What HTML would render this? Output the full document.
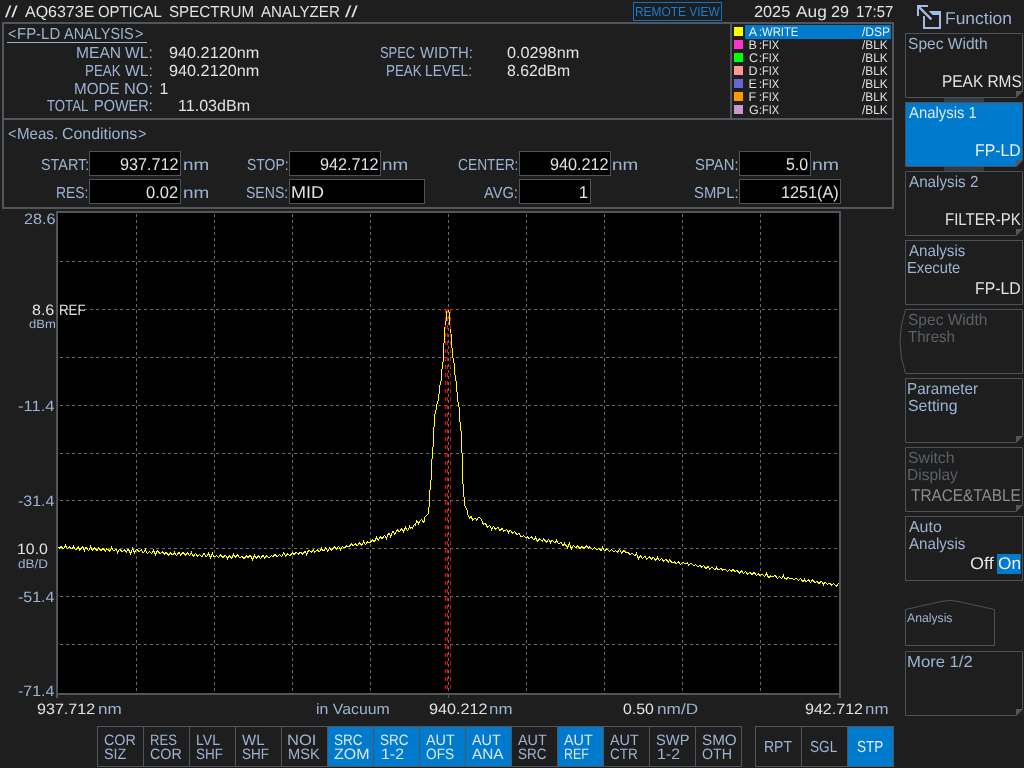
<!DOCTYPE html>
<html><head><meta charset="utf-8"><title>AQ6373E Optical Spectrum Analyzer</title>
<style>
html,body{margin:0;padding:0;}
body{width:1024px;height:768px;background:#1e1e1e;overflow:hidden;position:relative;font-family:"Liberation Sans",sans-serif;}
.t{position:absolute;white-space:pre;line-height:1;transform-origin:0 0;text-rendering:geometricPrecision;font-family:"Liberation Sans",sans-serif;}
.r{position:absolute;box-sizing:border-box;}
svg{position:absolute;left:0;top:0;}
#w{position:absolute;left:0;top:0;width:1024px;height:768px;will-change:transform;}
</style></head><body><div id="w">
<span class="t" style="left:5.40px;top:5px;font-size:16px;color:#e2e2e2;transform:scaleX(1.4164);">//</span>
<span class="t" style="left:24.57px;top:5px;font-size:16px;color:#e2e2e2;transform:scaleX(0.9990);">AQ6373E</span>
<span class="t" style="left:97.60px;top:5px;font-size:16px;color:#e2e2e2;transform:scaleX(0.9303);">OPTICAL</span>
<span class="t" style="left:169.12px;top:5px;font-size:16px;color:#e2e2e2;transform:scaleX(0.9471);">SPECTRUM</span>
<span class="t" style="left:260.77px;top:5px;font-size:16px;color:#e2e2e2;transform:scaleX(0.9465);">ANALYZER</span>
<span class="t" style="left:345.00px;top:5px;font-size:16px;color:#e2e2e2;transform:scaleX(1.4276);">//</span>
<div class="r" style="left:633px;top:2px;width:89px;height:19px;border:1px solid #0b74c8;"></div>
<span class="t" style="left:634.77px;top:5px;font-size:13px;color:#1080d8;transform:scaleX(0.9168);">REMOTE VIEW</span>
<span class="t" style="left:753.79px;top:5px;font-size:16px;color:#e2e2e2;transform:scaleX(1.0168);">2025</span>
<span class="t" style="left:795.57px;top:5px;font-size:16px;color:#e2e2e2;transform:scaleX(1.0818);">Aug</span>
<span class="t" style="left:830.69px;top:5px;font-size:16px;color:#e2e2e2;transform:scaleX(1.0099);">29</span>
<span class="t" style="left:856.17px;top:5px;font-size:16px;color:#e2e2e2;transform:scaleX(0.9286);">17:57</span>
<div class="r" style="left:2px;top:22px;width:892px;height:98px;border:2px solid #51565d;"></div>
<div class="r" style="left:2px;top:118px;width:892px;height:91px;border:2px solid #51565d;"></div>
<div class="r" style="left:730px;top:22px;width:164px;height:98px;border:2px solid #51565d;"></div>
<span class="t" style="left:8.41px;top:27px;font-size:16px;color:#9eb3d2;transform:scaleX(0.8855);">&lt;</span>
<span class="t" style="left:17.37px;top:27px;font-size:16px;color:#9eb3d2;transform:scaleX(0.9352);">FP-LD</span>
<span class="t" style="left:63.97px;top:27px;font-size:16px;color:#9eb3d2;transform:scaleX(0.9054);">ANALYSIS</span>
<span class="t" style="left:135.10px;top:27px;font-size:16px;color:#9eb3d2;transform:scaleX(0.8984);">&gt;</span>
<div class="r" style="left:7px;top:42px;width:140px;height:1px;background:#9eb3d2;"></div>
<span class="t" style="left:76.22px;top:46px;font-size:16px;color:#9eb3d2;transform:scaleX(0.9744);">MEAN</span>
<span class="t" style="left:124.94px;top:46px;font-size:16px;color:#9eb3d2;transform:scaleX(0.9748);">WL:</span>
<span class="t" style="left:168.75px;top:46px;font-size:16px;color:#e2e2e2;transform:scaleX(1.0151);">940.2120nm</span>
<span class="t" style="left:84.50px;top:64px;font-size:16px;color:#9eb3d2;transform:scaleX(0.8350);">PEAK</span>
<span class="t" style="left:124.94px;top:64px;font-size:16px;color:#9eb3d2;transform:scaleX(0.9748);">WL:</span>
<span class="t" style="left:168.75px;top:64px;font-size:16px;color:#e2e2e2;transform:scaleX(1.0151);">940.2120nm</span>
<span class="t" style="left:74.35px;top:82px;font-size:16px;color:#9eb3d2;transform:scaleX(0.9518);">MODE</span>
<span class="t" style="left:123.66px;top:82px;font-size:16px;color:#9eb3d2;transform:scaleX(1.0222);">NO:</span>
<span class="t" style="left:159.58px;top:82px;font-size:16px;color:#e2e2e2;transform:scaleX(1.0000);">1</span>
<span class="t" style="left:47.21px;top:99px;font-size:16px;color:#9eb3d2;transform:scaleX(0.8252);">TOTAL</span>
<span class="t" style="left:93.81px;top:99px;font-size:16px;color:#9eb3d2;transform:scaleX(0.9054);">POWER:</span>
<span class="t" style="left:178.28px;top:99px;font-size:16px;color:#e2e2e2;transform:scaleX(1.0038);">11.03dBm</span>
<span class="t" style="left:379.92px;top:46px;font-size:16px;color:#9eb3d2;transform:scaleX(0.8070);">SPEC</span>
<span class="t" style="left:419.64px;top:46px;font-size:16px;color:#9eb3d2;transform:scaleX(0.9285);">WIDTH:</span>
<span class="t" style="left:507.07px;top:46px;font-size:16px;color:#e2e2e2;transform:scaleX(1.0143);">0.0298nm</span>
<span class="t" style="left:385.50px;top:64px;font-size:16px;color:#9eb3d2;transform:scaleX(0.8374);">PEAK</span>
<span class="t" style="left:425.26px;top:64px;font-size:16px;color:#9eb3d2;transform:scaleX(0.8682);">LEVEL:</span>
<span class="t" style="left:507.02px;top:64px;font-size:16px;color:#e2e2e2;transform:scaleX(0.9855);">8.62dBm</span>
<div class="r" style="left:745px;top:25px;width:146px;height:14px;background:#007acc;"></div>
<div class="r" style="left:734px;top:27px;width:9px;height:9px;background:#ffff00;"></div>
<span class="t" style="left:748.77px;top:26px;font-size:12.5px;color:#f2f2f2;transform:scaleX(1.0000);">A</span>
<span class="t" style="left:758.86px;top:26px;font-size:12.5px;color:#f2f2f2;transform:scaleX(1.0000);">:</span>
<span class="t" style="left:762.45px;top:26px;font-size:12.5px;color:#f2f2f2;transform:scaleX(0.9018);">WRITE</span>
<span class="t" style="left:862.00px;top:26px;font-size:12.5px;color:#f2f2f2;transform:scaleX(0.9641);">/DSP</span>
<div class="r" style="left:734px;top:40px;width:9px;height:9px;background:#ff33cc;"></div>
<span class="t" style="left:748.48px;top:39px;font-size:12.5px;color:#e0e0e0;transform:scaleX(1.0000);">B</span>
<span class="t" style="left:758.86px;top:39px;font-size:12.5px;color:#e0e0e0;transform:scaleX(1.0000);">:</span>
<span class="t" style="left:761.60px;top:39px;font-size:12.5px;color:#e0e0e0;transform:scaleX(0.8809);">FIX</span>
<span class="t" style="left:862.00px;top:39px;font-size:12.5px;color:#e0e0e0;transform:scaleX(0.9458);">/BLK</span>
<div class="r" style="left:734px;top:53px;width:9px;height:9px;background:#00ff00;"></div>
<span class="t" style="left:748.88px;top:52px;font-size:12.5px;color:#e0e0e0;transform:scaleX(1.0000);">C</span>
<span class="t" style="left:758.86px;top:52px;font-size:12.5px;color:#e0e0e0;transform:scaleX(1.0000);">:</span>
<span class="t" style="left:761.60px;top:52px;font-size:12.5px;color:#e0e0e0;transform:scaleX(0.8809);">FIX</span>
<span class="t" style="left:862.00px;top:52px;font-size:12.5px;color:#e0e0e0;transform:scaleX(0.9458);">/BLK</span>
<div class="r" style="left:734px;top:66px;width:9px;height:9px;background:#ff9999;"></div>
<span class="t" style="left:748.48px;top:65px;font-size:12.5px;color:#e0e0e0;transform:scaleX(1.0000);">D</span>
<span class="t" style="left:758.86px;top:65px;font-size:12.5px;color:#e0e0e0;transform:scaleX(1.0000);">:</span>
<span class="t" style="left:761.60px;top:65px;font-size:12.5px;color:#e0e0e0;transform:scaleX(0.8809);">FIX</span>
<span class="t" style="left:862.00px;top:65px;font-size:12.5px;color:#e0e0e0;transform:scaleX(0.9458);">/BLK</span>
<div class="r" style="left:734px;top:79px;width:9px;height:9px;background:#6666cc;"></div>
<span class="t" style="left:748.48px;top:78px;font-size:12.5px;color:#e0e0e0;transform:scaleX(1.0000);">E</span>
<span class="t" style="left:758.86px;top:78px;font-size:12.5px;color:#e0e0e0;transform:scaleX(1.0000);">:</span>
<span class="t" style="left:761.60px;top:78px;font-size:12.5px;color:#e0e0e0;transform:scaleX(0.8809);">FIX</span>
<span class="t" style="left:862.00px;top:78px;font-size:12.5px;color:#e0e0e0;transform:scaleX(0.9458);">/BLK</span>
<div class="r" style="left:734px;top:92px;width:9px;height:9px;background:#ff9900;"></div>
<span class="t" style="left:748.48px;top:91px;font-size:12.5px;color:#e0e0e0;transform:scaleX(1.0000);">F</span>
<span class="t" style="left:758.86px;top:91px;font-size:12.5px;color:#e0e0e0;transform:scaleX(1.0000);">:</span>
<span class="t" style="left:761.60px;top:91px;font-size:12.5px;color:#e0e0e0;transform:scaleX(0.8809);">FIX</span>
<span class="t" style="left:862.00px;top:91px;font-size:12.5px;color:#e0e0e0;transform:scaleX(0.9458);">/BLK</span>
<div class="r" style="left:734px;top:105px;width:9px;height:9px;background:#cc99cc;"></div>
<span class="t" style="left:748.88px;top:104px;font-size:12.5px;color:#e0e0e0;transform:scaleX(1.0000);">G</span>
<span class="t" style="left:758.86px;top:104px;font-size:12.5px;color:#e0e0e0;transform:scaleX(1.0000);">:</span>
<span class="t" style="left:761.60px;top:104px;font-size:12.5px;color:#e0e0e0;transform:scaleX(0.8809);">FIX</span>
<span class="t" style="left:862.00px;top:104px;font-size:12.5px;color:#e0e0e0;transform:scaleX(0.9458);">/BLK</span>
<span class="t" style="left:7.70px;top:127px;font-size:16px;color:#9eb3d2;transform:scaleX(0.8984);">&lt;</span>
<span class="t" style="left:16.96px;top:127px;font-size:16px;color:#9eb3d2;transform:scaleX(0.9436);">Meas.</span>
<span class="t" style="left:61.80px;top:127px;font-size:16px;color:#9eb3d2;transform:scaleX(0.9956);">Conditions</span>
<span class="t" style="left:138.00px;top:127px;font-size:16px;color:#9eb3d2;transform:scaleX(0.8984);">&gt;</span>
<span class="t" style="left:40.60px;top:158px;font-size:16px;color:#9eb3d2;transform:scaleX(0.8985);">START:</span>
<div class="r" style="left:89px;top:151px;width:92px;height:25px;background:#000;border:1px solid #4d5359;"></div>
<span class="t" style="left:119.76px;top:156px;font-size:17px;color:#e2e2e2;transform:scaleX(0.9511);">937.712</span>
<span class="t" style="left:182.50px;top:158px;font-size:16px;color:#9eb3d2;transform:scaleX(1.1799);">nm</span>
<span class="t" style="left:56.36px;top:186px;font-size:16px;color:#9eb3d2;transform:scaleX(0.8677);">RES:</span>
<div class="r" style="left:89px;top:179px;width:92px;height:25px;background:#000;border:1px solid #4d5359;"></div>
<span class="t" style="left:146.13px;top:184px;font-size:17px;color:#e2e2e2;transform:scaleX(0.9700);">0.02</span>
<span class="t" style="left:182.50px;top:186px;font-size:16px;color:#9eb3d2;transform:scaleX(1.1799);">nm</span>
<span class="t" style="left:246.87px;top:158px;font-size:16px;color:#9eb3d2;transform:scaleX(0.8726);">STOP:</span>
<div class="r" style="left:289px;top:151px;width:92px;height:25px;background:#000;border:1px solid #4d5359;"></div>
<span class="t" style="left:319.76px;top:156px;font-size:17px;color:#e2e2e2;transform:scaleX(0.9511);">942.712</span>
<span class="t" style="left:382.25px;top:158px;font-size:16px;color:#9eb3d2;transform:scaleX(1.1799);">nm</span>
<span class="t" style="left:246.12px;top:186px;font-size:16px;color:#9eb3d2;transform:scaleX(0.8781);">SENS:</span>
<div class="r" style="left:289px;top:179px;width:136px;height:25px;background:#000;border:1px solid #4d5359;"></div>
<span class="t" style="left:291.02px;top:184px;font-size:17px;color:#e2e2e2;transform:scaleX(1.0615);">MID</span>
<span class="t" style="left:457.81px;top:158px;font-size:16px;color:#9eb3d2;transform:scaleX(0.8607);">CENTER:</span>
<div class="r" style="left:519px;top:151px;width:92px;height:25px;background:#000;border:1px solid #4d5359;"></div>
<span class="t" style="left:549.76px;top:156px;font-size:17px;color:#e2e2e2;transform:scaleX(0.9511);">940.212</span>
<span class="t" style="left:612.00px;top:158px;font-size:16px;color:#9eb3d2;transform:scaleX(1.1799);">nm</span>
<span class="t" style="left:484.47px;top:186px;font-size:16px;color:#9eb3d2;transform:scaleX(0.9137);">AVG:</span>
<div class="r" style="left:519px;top:179px;width:72px;height:25px;background:#000;border:1px solid #4d5359;"></div>
<span class="t" style="left:578.86px;top:184px;font-size:17px;color:#e2e2e2;transform:scaleX(1.0000);">1</span>
<span class="t" style="left:694.83px;top:158px;font-size:16px;color:#9eb3d2;transform:scaleX(0.9293);">SPAN:</span>
<div class="r" style="left:739px;top:151px;width:72px;height:25px;background:#000;border:1px solid #4d5359;"></div>
<span class="t" style="left:786.11px;top:156px;font-size:17px;color:#e2e2e2;transform:scaleX(0.9348);">5.0</span>
<span class="t" style="left:811.71px;top:158px;font-size:16px;color:#9eb3d2;transform:scaleX(1.2172);">nm</span>
<span class="t" style="left:693.83px;top:186px;font-size:16px;color:#9eb3d2;transform:scaleX(0.9271);">SMPL:</span>
<div class="r" style="left:739px;top:179px;width:102px;height:25px;background:#000;border:1px solid #4d5359;"></div>
<span class="t" style="left:781.27px;top:184px;font-size:17px;color:#e2e2e2;transform:scaleX(0.9546);">1251(A)</span>
<svg width="1024" height="768" viewBox="0 0 1024 768" shape-rendering="crispEdges">
<rect x="57" y="212" width="783" height="482" fill="#000" stroke="#51565d" stroke-width="2"/>
<rect x="56" y="695" width="2" height="3" fill="#51565d"/>
<rect x="839" y="695" width="2" height="3" fill="#51565d"/>
<rect x="448" y="695" width="1" height="3" fill="#51565d"/>
<line x1="136.5" y1="214" x2="136.5" y2="692" stroke="#6a6a6a" stroke-width="1" stroke-dasharray="3 3"/>
<line x1="214.5" y1="214" x2="214.5" y2="692" stroke="#6a6a6a" stroke-width="1" stroke-dasharray="3 3"/>
<line x1="292.5" y1="214" x2="292.5" y2="692" stroke="#6a6a6a" stroke-width="1" stroke-dasharray="3 3"/>
<line x1="370.5" y1="214" x2="370.5" y2="692" stroke="#6a6a6a" stroke-width="1" stroke-dasharray="3 3"/>
<line x1="448.5" y1="214" x2="448.5" y2="692" stroke="#6a6a6a" stroke-width="1" stroke-dasharray="3 3"/>
<line x1="526.5" y1="214" x2="526.5" y2="692" stroke="#6a6a6a" stroke-width="1" stroke-dasharray="3 3"/>
<line x1="604.5" y1="214" x2="604.5" y2="692" stroke="#6a6a6a" stroke-width="1" stroke-dasharray="3 3"/>
<line x1="682.5" y1="214" x2="682.5" y2="692" stroke="#6a6a6a" stroke-width="1" stroke-dasharray="3 3"/>
<line x1="760.5" y1="214" x2="760.5" y2="692" stroke="#6a6a6a" stroke-width="1" stroke-dasharray="3 3"/>
<line x1="60" y1="261.5" x2="838" y2="261.5" stroke="#6a6a6a" stroke-width="1" stroke-dasharray="3 3"/>
<line x1="60" y1="309.5" x2="838" y2="309.5" stroke="#6a6a6a" stroke-width="1" stroke-dasharray="3 3"/>
<line x1="60" y1="357.5" x2="838" y2="357.5" stroke="#6a6a6a" stroke-width="1" stroke-dasharray="3 3"/>
<line x1="60" y1="405.5" x2="838" y2="405.5" stroke="#6a6a6a" stroke-width="1" stroke-dasharray="3 3"/>
<line x1="60" y1="453.5" x2="838" y2="453.5" stroke="#6a6a6a" stroke-width="1" stroke-dasharray="3 3"/>
<line x1="60" y1="500.5" x2="838" y2="500.5" stroke="#6a6a6a" stroke-width="1" stroke-dasharray="3 3"/>
<line x1="60" y1="548.5" x2="838" y2="548.5" stroke="#6a6a6a" stroke-width="1" stroke-dasharray="3 3"/>
<line x1="60" y1="596.5" x2="838" y2="596.5" stroke="#6a6a6a" stroke-width="1" stroke-dasharray="3 3"/>
<line x1="60" y1="644.5" x2="838" y2="644.5" stroke="#6a6a6a" stroke-width="1" stroke-dasharray="3 3"/>
<polyline points="58.5,547.5 59.5,548.5 60.5,546.5 61.5,546.5 62.5,548.5 63.5,548.5 64.5,547.5 65.5,545.5 66.5,547.5 67.5,548.5 68.5,547.5 69.5,546.5 70.5,548.5 71.5,548.5 72.5,548.5 73.5,546.5 74.5,548.5 75.5,549.5 76.5,549.5 77.5,547.5 78.5,546.5 79.5,550.5 80.5,549.5 81.5,547.5 82.5,546.5 83.5,548.5 84.5,550.5 85.5,547.5 86.5,547.5 87.5,549.5 88.5,550.5 89.5,549.5 90.5,546.5 91.5,548.5 92.5,550.5 93.5,549.5 94.5,547.5 95.5,548.5 96.5,550.5 97.5,550.5 98.5,547.5 99.5,548.5 100.5,550.5 101.5,550.5 102.5,548.5 103.5,548.5 104.5,550.5 105.5,551.5 106.5,548.5 107.5,549.5 108.5,549.5 109.5,551.5 110.5,550.5 111.5,547.5 112.5,549.5 113.5,550.5 114.5,550.5 115.5,549.5 116.5,549.5 117.5,552.5 118.5,550.5 119.5,549.5 120.5,549.5 121.5,551.5 122.5,551.5 123.5,550.5 124.5,549.5 125.5,551.5 126.5,552.5 127.5,549.5 128.5,549.5 129.5,551.5 130.5,553.5 131.5,551.5 132.5,548.5 133.5,550.5 134.5,552.5 135.5,550.5 136.5,549.5 137.5,549.5 138.5,551.5 139.5,551.5 140.5,550.5 141.5,549.5 142.5,552.5 143.5,552.5 144.5,551.5 145.5,549.5 146.5,552.5 147.5,553.5 148.5,552.5 149.5,551.5 150.5,552.5 151.5,553.5 152.5,552.5 153.5,550.5 154.5,552.5 155.5,554.5 156.5,552.5 157.5,550.5 158.5,551.5 159.5,553.5 160.5,553.5 161.5,552.5 162.5,551.5 163.5,553.5 164.5,554.5 165.5,552.5 166.5,552.5 167.5,554.5 168.5,555.5 169.5,553.5 170.5,552.5 171.5,554.5 172.5,554.5 173.5,554.5 174.5,552.5 175.5,554.5 176.5,555.5 177.5,554.5 178.5,552.5 179.5,552.5 180.5,555.5 181.5,554.5 182.5,552.5 183.5,552.5 184.5,554.5 185.5,555.5 186.5,553.5 187.5,552.5 188.5,554.5 189.5,555.5 190.5,554.5 191.5,552.5 192.5,555.5 193.5,556.5 194.5,554.5 195.5,553.5 196.5,554.5 197.5,556.5 198.5,555.5 199.5,554.5 200.5,555.5 201.5,556.5 202.5,556.5 203.5,553.5 204.5,553.5 205.5,556.5 206.5,556.5 207.5,555.5 208.5,553.5 209.5,555.5 210.5,557.5 211.5,555.5 212.5,553.5 213.5,556.5 214.5,556.5 215.5,556.5 216.5,555.5 217.5,556.5 218.5,557.5 219.5,556.5 220.5,554.5 221.5,555.5 222.5,557.5 223.5,557.5 224.5,555.5 225.5,555.5 226.5,556.5 227.5,558.5 228.5,556.5 229.5,555.5 230.5,557.5 231.5,558.5 232.5,556.5 233.5,554.5 234.5,556.5 235.5,557.5 236.5,555.5 237.5,554.5 238.5,556.5 239.5,557.5 240.5,557.5 241.5,556.5 242.5,556.5 243.5,558.5 244.5,558.5 245.5,556.5 246.5,555.5 247.5,557.5 248.5,557.5 249.5,555.5 250.5,555.5 251.5,557.5 252.5,559.5 253.5,557.5 254.5,555.5 255.5,557.5 256.5,558.5 257.5,556.5 258.5,555.5 259.5,557.5 260.5,558.5 261.5,557.5 262.5,555.5 263.5,555.5 264.5,558.5 265.5,557.5 266.5,555.5 267.5,556.5 268.5,557.5 269.5,557.5 270.5,556.5 271.5,555.5 272.5,556.5 273.5,556.5 274.5,554.5 275.5,554.5 276.5,556.5 277.5,556.5 278.5,555.5 279.5,554.5 280.5,555.5 281.5,556.5 282.5,555.5 283.5,552.5 284.5,553.5 285.5,556.5 286.5,555.5 287.5,553.5 288.5,554.5 289.5,555.5 290.5,555.5 291.5,553.5 292.5,552.5 293.5,554.5 294.5,554.5 295.5,552.5 296.5,552.5 297.5,553.5 298.5,554.5 299.5,552.5 300.5,552.5 301.5,552.5 302.5,554.5 303.5,553.5 304.5,551.5 305.5,551.5 306.5,554.5 307.5,552.5 308.5,550.5 309.5,550.5 310.5,551.5 311.5,552.5 312.5,550.5 313.5,549.5 314.5,552.5 315.5,551.5 316.5,550.5 317.5,549.5 318.5,551.5 319.5,551.5 320.5,550.5 321.5,548.5 322.5,550.5 323.5,550.5 324.5,550.5 325.5,547.5 326.5,548.5 327.5,551.5 328.5,550.5 329.5,547.5 330.5,548.5 331.5,550.5 332.5,549.5 333.5,547.5 334.5,546.5 335.5,548.5 336.5,549.5 337.5,547.5 338.5,546.5 339.5,547.5 340.5,549.5 341.5,547.5 342.5,546.5 343.5,547.5 344.5,547.5 345.5,547.5 346.5,545.5 347.5,546.5 348.5,546.5 349.5,546.5 350.5,544.5 351.5,543.5 352.5,545.5 353.5,545.5 354.5,544.5 355.5,543.5 356.5,545.5 357.5,545.5 358.5,544.5 359.5,542.5 360.5,543.5 361.5,545.5 362.5,544.5 363.5,541.5 364.5,543.5 365.5,544.5 366.5,543.5 367.5,541.5 368.5,542.5 369.5,542.5 370.5,542.5 371.5,540.5 372.5,539.5 373.5,541.5 374.5,541.5 375.5,539.5 376.5,537.5 377.5,539.5 378.5,540.5 379.5,537.5 380.5,536.5 381.5,538.5 382.5,538.5 383.5,536.5 384.5,535.5 385.5,536.5 386.5,538.5 387.5,535.5 388.5,533.5 389.5,533.5 390.5,536.5 391.5,534.5 392.5,531.5 393.5,531.5 394.5,534.5 395.5,533.5 396.5,530.5 397.5,529.5 398.5,531.5 399.5,531.5 400.5,530.5 401.5,528.5 402.5,529.5 403.5,531.5 404.5,529.5 405.5,527.5 406.5,529.5 407.5,530.5 408.5,529.5 409.5,526.5 410.5,528.5 411.5,527.5 412.5,528.5 413.5,525.5 414.5,524.5 415.5,525.5 416.5,520.5 417.5,521.5 418.5,523.5 419.5,521.5 420.5,520.5 421.5,519.5 422.5,520.5 423.5,522.5 424.5,521.5 424.5,517.5 425.5,516.5 426.5,515.5 427.5,514.5 428.5,513.5 428.5,507.5 429.5,506.5 429.5,490.5 430.5,489.5 430.5,480.5 431.5,479.5 431.5,459.5 432.5,458.5 432.5,447.5 433.5,446.5 433.5,427.5 434.5,426.5 434.5,414.5 435.5,413.5 435.5,410.5 436.5,409.5 436.5,404.5 437.5,403.5 437.5,401.5 438.5,400.5 438.5,394.5 439.5,393.5 439.5,385.5 440.5,384.5 440.5,381.5 441.5,380.5 441.5,369.5 442.5,368.5 442.5,362.5 443.5,361.5 443.5,343.5 444.5,342.5 444.5,327.5 445.5,326.5 445.5,321.5 446.5,320.5 446.5,311.5 447.5,310.5 447.5,310.5 448.5,310.5 448.5,311.5 449.5,312.5 449.5,324.5 450.5,325.5 450.5,333.5 451.5,334.5 451.5,347.5 452.5,348.5 452.5,357.5 453.5,358.5 453.5,362.5 454.5,363.5 454.5,374.5 455.5,375.5 455.5,380.5 456.5,381.5 456.5,391.5 457.5,392.5 457.5,401.5 458.5,402.5 458.5,406.5 459.5,407.5 459.5,421.5 460.5,422.5 460.5,430.5 461.5,431.5 461.5,452.5 462.5,453.5 462.5,483.5 463.5,484.5 463.5,496.5 464.5,497.5 464.5,505.5 465.5,506.5 465.5,507.5 466.5,508.5 466.5,509.5 467.5,510.5 467.5,514.5 468.5,515.5 468.5,516.5 469.5,517.5 469.5,518.5 470.5,517.5 470.5,516.5 471.5,516.5 471.5,518.5 472.5,518.5 472.5,520.5 473.5,519.5 473.5,519.5 474.5,518.5 474.5,518.5 475.5,518.5 475.5,518.5 476.5,519.5 476.5,520.5 477.5,518.5 477.5,518.5 478.5,517.5 478.5,517.5 479.5,517.5 479.5,517.5 480.5,518.5 481.5,519.5 482.5,522.5 483.5,524.5 484.5,523.5 485.5,523.5 486.5,525.5 487.5,527.5 488.5,526.5 489.5,525.5 490.5,526.5 491.5,529.5 492.5,527.5 493.5,526.5 494.5,527.5 495.5,529.5 496.5,528.5 497.5,527.5 498.5,527.5 499.5,530.5 500.5,530.5 501.5,528.5 502.5,528.5 503.5,531.5 504.5,530.5 505.5,530.5 506.5,529.5 507.5,530.5 508.5,532.5 509.5,530.5 510.5,530.5 511.5,531.5 512.5,533.5 513.5,532.5 514.5,531.5 515.5,532.5 516.5,534.5 517.5,534.5 518.5,533.5 519.5,533.5 520.5,536.5 521.5,536.5 522.5,536.5 523.5,535.5 524.5,536.5 525.5,537.5 526.5,537.5 527.5,536.5 528.5,538.5 529.5,538.5 530.5,537.5 531.5,536.5 532.5,538.5 533.5,539.5 534.5,539.5 535.5,537.5 536.5,539.5 537.5,541.5 538.5,540.5 539.5,538.5 540.5,539.5 541.5,540.5 542.5,541.5 543.5,538.5 544.5,539.5 545.5,541.5 546.5,542.5 547.5,540.5 548.5,539.5 549.5,540.5 550.5,542.5 551.5,540.5 552.5,540.5 553.5,541.5 554.5,542.5 555.5,542.5 556.5,540.5 557.5,542.5 558.5,543.5 559.5,543.5 560.5,542.5 561.5,542.5 562.5,545.5 563.5,545.5 564.5,543.5 565.5,545.5 566.5,545.5 567.5,547.5 568.5,545.5 569.5,543.5 570.5,546.5 571.5,548.5 572.5,546.5 573.5,545.5 574.5,546.5 575.5,547.5 576.5,547.5 577.5,545.5 578.5,546.5 579.5,548.5 580.5,548.5 581.5,546.5 582.5,546.5 583.5,548.5 584.5,548.5 585.5,546.5 586.5,545.5 587.5,547.5 588.5,548.5 589.5,546.5 590.5,547.5 591.5,548.5 592.5,549.5 593.5,548.5 594.5,547.5 595.5,548.5 596.5,549.5 597.5,549.5 598.5,548.5 599.5,548.5 600.5,550.5 601.5,550.5 602.5,547.5 603.5,549.5 604.5,550.5 605.5,550.5 606.5,548.5 607.5,549.5 608.5,550.5 609.5,551.5 610.5,550.5 611.5,549.5 612.5,550.5 613.5,551.5 614.5,551.5 615.5,550.5 616.5,551.5 617.5,552.5 618.5,550.5 619.5,549.5 620.5,550.5 621.5,553.5 622.5,552.5 623.5,550.5 624.5,550.5 625.5,552.5 626.5,552.5 627.5,552.5 628.5,552.5 629.5,554.5 630.5,554.5 631.5,553.5 632.5,553.5 633.5,554.5 634.5,555.5 635.5,555.5 636.5,553.5 637.5,556.5 638.5,558.5 639.5,556.5 640.5,555.5 641.5,557.5 642.5,558.5 643.5,557.5 644.5,556.5 645.5,556.5 646.5,559.5 647.5,558.5 648.5,557.5 649.5,556.5 650.5,558.5 651.5,559.5 652.5,557.5 653.5,557.5 654.5,558.5 655.5,560.5 656.5,559.5 657.5,557.5 658.5,559.5 659.5,560.5 660.5,559.5 661.5,558.5 662.5,559.5 663.5,561.5 664.5,560.5 665.5,559.5 666.5,559.5 667.5,561.5 668.5,562.5 669.5,559.5 670.5,560.5 671.5,562.5 672.5,562.5 673.5,562.5 674.5,561.5 675.5,563.5 676.5,563.5 677.5,562.5 678.5,561.5 679.5,563.5 680.5,564.5 681.5,563.5 682.5,562.5 683.5,562.5 684.5,563.5 685.5,563.5 686.5,563.5 687.5,562.5 688.5,565.5 689.5,564.5 690.5,563.5 691.5,563.5 692.5,564.5 693.5,565.5 694.5,565.5 695.5,564.5 696.5,565.5 697.5,566.5 698.5,566.5 699.5,565.5 700.5,565.5 701.5,567.5 702.5,566.5 703.5,565.5 704.5,566.5 705.5,568.5 706.5,568.5 707.5,566.5 708.5,566.5 709.5,569.5 710.5,568.5 711.5,567.5 712.5,567.5 713.5,568.5 714.5,569.5 715.5,569.5 716.5,567.5 717.5,569.5 718.5,569.5 719.5,569.5 720.5,568.5 721.5,568.5 722.5,570.5 723.5,569.5 724.5,569.5 725.5,569.5 726.5,570.5 727.5,571.5 728.5,570.5 729.5,569.5 730.5,570.5 731.5,571.5 732.5,569.5 733.5,569.5 734.5,571.5 735.5,571.5 736.5,570.5 737.5,570.5 738.5,572.5 739.5,573.5 740.5,571.5 741.5,570.5 742.5,572.5 743.5,573.5 744.5,572.5 745.5,571.5 746.5,572.5 747.5,574.5 748.5,573.5 749.5,572.5 750.5,572.5 751.5,574.5 752.5,574.5 753.5,572.5 754.5,572.5 755.5,574.5 756.5,575.5 757.5,574.5 758.5,573.5 759.5,575.5 760.5,575.5 761.5,574.5 762.5,574.5 763.5,575.5 764.5,576.5 765.5,575.5 766.5,573.5 767.5,575.5 768.5,577.5 769.5,577.5 770.5,575.5 771.5,576.5 772.5,576.5 773.5,576.5 774.5,575.5 775.5,575.5 776.5,577.5 777.5,578.5 778.5,577.5 779.5,576.5 780.5,577.5 781.5,578.5 782.5,577.5 783.5,575.5 784.5,578.5 785.5,578.5 786.5,579.5 787.5,577.5 788.5,577.5 789.5,578.5 790.5,578.5 791.5,578.5 792.5,578.5 793.5,579.5 794.5,579.5 795.5,578.5 796.5,578.5 797.5,579.5 798.5,580.5 799.5,579.5 800.5,578.5 801.5,579.5 802.5,581.5 803.5,581.5 804.5,579.5 805.5,581.5 806.5,581.5 807.5,580.5 808.5,579.5 809.5,581.5 810.5,582.5 811.5,581.5 812.5,579.5 813.5,580.5 814.5,582.5 815.5,582.5 816.5,581.5 817.5,581.5 818.5,583.5 819.5,583.5 820.5,581.5 821.5,581.5 822.5,582.5 823.5,584.5 824.5,582.5 825.5,582.5 826.5,583.5 827.5,584.5 828.5,583.5 829.5,583.5 830.5,583.5 831.5,585.5 832.5,584.5 833.5,583.5 834.5,584.5 835.5,585.5 836.5,586.5 837.5,584.5 838.5,583.5" fill="none" stroke="#ffff00" stroke-width="1"/>
<line x1="445.5" y1="309" x2="445.5" y2="693" stroke="#ff0000" stroke-width="1" stroke-dasharray="4 4"/>
<line x1="447.5" y1="309" x2="447.5" y2="693" stroke="#ff0000" stroke-width="1" stroke-dasharray="4 4"/>
<line x1="450.5" y1="309" x2="450.5" y2="693" stroke="#ff0000" stroke-width="1" stroke-dasharray="4 4"/>
<rect x="445" y="309" width="4" height="1" fill="#ff0000"/>
</svg>
<span class="t" style="left:23.59px;top:212px;font-size:15px;color:#9eb3d2;transform:scaleX(1.0793);">28.6</span>
<span class="t" style="left:32.41px;top:303px;font-size:15px;color:#e2e2e2;transform:scaleX(1.0685);">8.6</span>
<span class="t" style="left:58.66px;top:303px;font-size:15px;color:#e2e2e2;transform:scaleX(0.8875);">REF</span>
<span class="t" style="left:28.55px;top:318px;font-size:12px;color:#9eb3d2;transform:scaleX(1.0903);">dBm</span>
<span class="t" style="left:18.02px;top:399px;font-size:15px;color:#9eb3d2;transform:scaleX(1.1023);">-11.4</span>
<span class="t" style="left:18.05px;top:494px;font-size:15px;color:#9eb3d2;transform:scaleX(1.0653);">-31.4</span>
<span class="t" style="left:16.89px;top:542px;font-size:15px;color:#e2e2e2;transform:scaleX(1.0608);">10.0</span>
<span class="t" style="left:17.53px;top:558px;font-size:12.5px;color:#9eb3d2;transform:scaleX(1.0797);">dB/D</span>
<span class="t" style="left:18.05px;top:590px;font-size:15px;color:#9eb3d2;transform:scaleX(1.0653);">-51.4</span>
<span class="t" style="left:18.05px;top:684px;font-size:15px;color:#9eb3d2;transform:scaleX(1.0653);">-71.4</span>
<span class="t" style="left:37.36px;top:702px;font-size:15px;color:#e2e2e2;transform:scaleX(1.0732);">937.712</span>
<span class="t" style="left:97.62px;top:702px;font-size:15px;color:#9eb3d2;transform:scaleX(1.1394);">nm</span>
<span class="t" style="left:316.45px;top:702px;font-size:15px;color:#9eb3d2;transform:scaleX(1.0585);">in Vacuum</span>
<span class="t" style="left:428.50px;top:702px;font-size:15px;color:#e2e2e2;transform:scaleX(1.0799);">940.212</span>
<span class="t" style="left:488.89px;top:702px;font-size:15px;color:#9eb3d2;transform:scaleX(1.1261);">nm</span>
<span class="t" style="left:623.48px;top:702px;font-size:15px;color:#e2e2e2;transform:scaleX(1.0576);">0.50</span>
<span class="t" style="left:656.61px;top:702px;font-size:15px;color:#9eb3d2;transform:scaleX(1.1467);">nm/D</span>
<span class="t" style="left:804.76px;top:702px;font-size:15px;color:#e2e2e2;transform:scaleX(1.0704);">942.712</span>
<span class="t" style="left:864.64px;top:702px;font-size:15px;color:#9eb3d2;transform:scaleX(1.1261);">nm</span>
<div class="r" style="left:97px;top:726px;width:47px;height:41px;border:1px solid #51565d;"></div>
<span class="t" style="left:104.04px;top:733px;font-size:15px;color:#9eb3d2;transform:scaleX(0.9517);">COR</span>
<span class="t" style="left:104.10px;top:747px;font-size:15px;color:#9eb3d2;transform:scaleX(0.9572);">SIZ</span>
<div class="r" style="left:143px;top:726px;width:47px;height:41px;border:1px solid #51565d;"></div>
<span class="t" style="left:149.68px;top:733px;font-size:15px;color:#9eb3d2;transform:scaleX(0.8726);">RES</span>
<span class="t" style="left:150.04px;top:747px;font-size:15px;color:#9eb3d2;transform:scaleX(0.9517);">COR</span>
<div class="r" style="left:189px;top:726px;width:47px;height:41px;border:1px solid #51565d;"></div>
<span class="t" style="left:195.59px;top:733px;font-size:15px;color:#9eb3d2;transform:scaleX(0.9434);">LVL</span>
<span class="t" style="left:196.14px;top:747px;font-size:15px;color:#9eb3d2;transform:scaleX(0.8999);">SHF</span>
<div class="r" style="left:235px;top:726px;width:47px;height:41px;border:1px solid #51565d;"></div>
<span class="t" style="left:242.44px;top:733px;font-size:15px;color:#9eb3d2;transform:scaleX(0.9979);">WL</span>
<span class="t" style="left:242.39px;top:747px;font-size:15px;color:#9eb3d2;transform:scaleX(0.9017);">SHF</span>
<div class="r" style="left:281px;top:726px;width:47px;height:41px;border:1px solid #51565d;"></div>
<span class="t" style="left:287.40px;top:733px;font-size:15px;color:#9eb3d2;transform:scaleX(1.1014);">NOI</span>
<span class="t" style="left:287.80px;top:747px;font-size:15px;color:#9eb3d2;transform:scaleX(0.9772);">MSK</span>
<div class="r" style="left:327px;top:726px;width:47px;height:41px;background:#007acc;border:1px solid #51565d;"></div>
<span class="t" style="left:334.14px;top:733px;font-size:15px;color:#dce8f4;transform:scaleX(0.9036);">SRC</span>
<span class="t" style="left:334.00px;top:747px;font-size:15px;color:#dce8f4;transform:scaleX(1.0669);">ZOM</span>
<div class="r" style="left:373px;top:726px;width:47px;height:41px;background:#007acc;border:1px solid #51565d;"></div>
<span class="t" style="left:380.14px;top:733px;font-size:15px;color:#dce8f4;transform:scaleX(0.9036);">SRC</span>
<span class="t" style="left:380.79px;top:747px;font-size:15px;color:#dce8f4;transform:scaleX(1.0614);">1-2</span>
<div class="r" style="left:419px;top:726px;width:47px;height:41px;background:#007acc;border:1px solid #51565d;"></div>
<span class="t" style="left:426.17px;top:733px;font-size:15px;color:#dce8f4;transform:scaleX(0.9586);">AUT</span>
<span class="t" style="left:426.46px;top:747px;font-size:15px;color:#dce8f4;transform:scaleX(0.9131);">OFS</span>
<div class="r" style="left:465px;top:726px;width:47px;height:41px;background:#007acc;border:1px solid #51565d;"></div>
<span class="t" style="left:472.17px;top:733px;font-size:15px;color:#dce8f4;transform:scaleX(0.9586);">AUT</span>
<span class="t" style="left:472.47px;top:747px;font-size:15px;color:#dce8f4;transform:scaleX(1.0234);">ANA</span>
<div class="r" style="left:511px;top:726px;width:47px;height:41px;border:1px solid #51565d;"></div>
<span class="t" style="left:518.17px;top:733px;font-size:15px;color:#9eb3d2;transform:scaleX(0.9586);">AUT</span>
<span class="t" style="left:518.14px;top:747px;font-size:15px;color:#9eb3d2;transform:scaleX(0.9036);">SRC</span>
<div class="r" style="left:557px;top:726px;width:47px;height:41px;background:#007acc;border:1px solid #51565d;"></div>
<span class="t" style="left:564.17px;top:733px;font-size:15px;color:#dce8f4;transform:scaleX(0.9586);">AUT</span>
<span class="t" style="left:564.38px;top:747px;font-size:15px;color:#dce8f4;transform:scaleX(0.8289);">REF</span>
<div class="r" style="left:603px;top:726px;width:47px;height:41px;border:1px solid #51565d;"></div>
<span class="t" style="left:610.17px;top:733px;font-size:15px;color:#9eb3d2;transform:scaleX(0.9586);">AUT</span>
<span class="t" style="left:610.02px;top:747px;font-size:15px;color:#9eb3d2;transform:scaleX(0.9018);">CTR</span>
<div class="r" style="left:649px;top:726px;width:47px;height:41px;border:1px solid #51565d;"></div>
<span class="t" style="left:655.74px;top:733px;font-size:15px;color:#9eb3d2;transform:scaleX(0.9781);">SWP</span>
<span class="t" style="left:656.79px;top:747px;font-size:15px;color:#9eb3d2;transform:scaleX(1.0614);">1-2</span>
<div class="r" style="left:695px;top:726px;width:47px;height:41px;border:1px solid #51565d;"></div>
<span class="t" style="left:701.91px;top:733px;font-size:15px;color:#9eb3d2;transform:scaleX(1.0160);">SMO</span>
<span class="t" style="left:702.43px;top:747px;font-size:15px;color:#9eb3d2;transform:scaleX(0.9481);">OTH</span>
<div class="r" style="left:755px;top:726px;width:47px;height:41px;border:1px solid #51565d;"></div>
<span class="t" style="left:764.35px;top:740px;font-size:16px;color:#9eb3d2;transform:scaleX(0.8740);">RPT</span>
<div class="r" style="left:801px;top:726px;width:47px;height:41px;border:1px solid #51565d;"></div>
<span class="t" style="left:810.14px;top:740px;font-size:16px;color:#9eb3d2;transform:scaleX(0.8532);">SGL</span>
<div class="r" style="left:847px;top:726px;width:47px;height:41px;background:#007acc;border:1px solid #51565d;"></div>
<span class="t" style="left:856.89px;top:740px;font-size:16px;color:#e6eef7;transform:scaleX(0.8455);">STP</span>
<svg width="1024" height="768" viewBox="0 0 1024 768">
<path d="M923,16 H925 V27 H939 V15 H932.6 L928.6,11 H941 V29 H923 Z" fill="#a4bbe6"/>
<path d="M919.5,7.5 L931.5,19.5" fill="none" stroke="#1e1e1e" stroke-width="5.2"/>
<path d="M917,5 H928 V7 H919 V16 H917 Z" fill="#a4bbe6"/>
<path d="M918,6 L931.4,19.4" fill="none" stroke="#a4bbe6" stroke-width="2.3"/>
<path d="M905.5,33.5 H1022.5 V91.0 L1016.0,97.5 H905.5 Z" fill="none" stroke="#4d5257" stroke-width="1"/>
<path d="M1016.0,91.0 H1023.0 L1016.0,98.0 Z" fill="#51565d"/>
<rect x="944" y="98" width="40" height="4" fill="#323c46" shape-rendering="crispEdges"/>
<path d="M905.5,102.5 H1022.5 V160.0 L1016.0,166.5 H905.5 Z" fill="#007acc" stroke="#4d5257" stroke-width="1"/>
<path d="M1016.0,160.0 H1023.0 L1016.0,167.0 Z" fill="#51565d"/>
<rect x="944" y="167" width="40" height="4" fill="#323c46" shape-rendering="crispEdges"/>
<path d="M905.5,171.5 H1022.5 V229.0 L1016.0,235.5 H905.5 Z" fill="none" stroke="#4d5257" stroke-width="1"/>
<path d="M1016.0,229.0 H1023.0 L1016.0,236.0 Z" fill="#51565d"/>
<rect x="905.5" y="240.5" width="117.0" height="64.0" fill="none" stroke="#4d5257" stroke-width="1"/>
<path d="M905.5,309.5 H1022.5 V373.5 H905.5 Q894.5,341.5 905.5,309.5 Z" fill="none" stroke="#4d5257" stroke-width="1"/>
<path d="M905.5,378.5 H1022.5 V436.0 L1016.0,442.5 H905.5 Z" fill="none" stroke="#4d5257" stroke-width="1"/>
<path d="M1016.0,436.0 H1023.0 L1016.0,443.0 Z" fill="#51565d"/>
<path d="M905.5,447.5 H1022.5 V505.0 L1016.0,511.5 H905.5 Z" fill="none" stroke="#4d5257" stroke-width="1"/>
<path d="M1016.0,505.0 H1023.0 L1016.0,512.0 Z" fill="#51565d"/>
<rect x="905.5" y="516.5" width="117.0" height="64.0" fill="none" stroke="#4d5257" stroke-width="1"/>
<path d="M905.5,651.5 H1022.5 V709.0 L1016.0,715.5 H905.5 Z" fill="none" stroke="#4d5257" stroke-width="1"/>
<path d="M1016.0,709.0 H1023.0 L1016.0,716.0 Z" fill="#51565d"/>
<path d="M905.5,645.5 V609.5 L941,601.5 Q949.5,599 958,601.5 L994.5,609.5 V645.5 Z" fill="none" stroke="#4d5257" stroke-width="1"/>
</svg>
<span class="t" style="left:945.17px;top:10px;font-size:17px;color:#9eb3d2;transform:scaleX(1.0269);">Function</span>
<span class="t" style="left:908.00px;top:37px;font-size:16px;color:#9eb3d2;transform:scaleX(0.9730);">Spec Width</span>
<span class="t" style="left:941.53px;top:73px;font-size:17px;color:#e2e2e2;transform:scaleX(0.9078);">PEAK RMS</span>
<span class="t" style="left:908.67px;top:106px;font-size:16px;color:#dde8f4;transform:scaleX(0.9298);">Analysis 1</span>
<span class="t" style="left:975.31px;top:142px;font-size:17px;color:#f0f0f0;transform:scaleX(0.9271);">FP-LD</span>
<span class="t" style="left:908.67px;top:175px;font-size:16px;color:#9eb3d2;transform:scaleX(0.9510);">Analysis 2</span>
<span class="t" style="left:945.37px;top:211px;font-size:17px;color:#e2e2e2;transform:scaleX(0.8850);">FILTER-PK</span>
<span class="t" style="left:908.67px;top:244px;font-size:16px;color:#9eb3d2;transform:scaleX(0.9461);">Analysis</span>
<span class="t" style="left:907.49px;top:261px;font-size:16px;color:#9eb3d2;transform:scaleX(0.9195);">Execute</span>
<span class="t" style="left:975.31px;top:280px;font-size:17px;color:#e2e2e2;transform:scaleX(0.9271);">FP-LD</span>
<span class="t" style="left:908.00px;top:313px;font-size:16px;color:#596067;transform:scaleX(0.9705);">Spec Width</span>
<span class="t" style="left:908.37px;top:330px;font-size:16px;color:#596067;transform:scaleX(0.9439);">Thresh</span>
<span class="t" style="left:907.45px;top:382px;font-size:16px;color:#9eb3d2;transform:scaleX(0.9519);">Parameter</span>
<span class="t" style="left:907.98px;top:399px;font-size:16px;color:#9eb3d2;transform:scaleX(0.9945);">Setting</span>
<span class="t" style="left:907.99px;top:451px;font-size:16px;color:#596067;transform:scaleX(0.9873);">Switch</span>
<span class="t" style="left:907.43px;top:468px;font-size:16px;color:#596067;transform:scaleX(0.9693);">Display</span>
<span class="t" style="left:911.26px;top:487px;font-size:17px;color:#8c8c8c;transform:scaleX(0.9032);">TRACE&amp;TABLE</span>
<span class="t" style="left:908.67px;top:520px;font-size:16px;color:#9eb3d2;transform:scaleX(0.9946);">Auto</span>
<span class="t" style="left:908.67px;top:537px;font-size:16px;color:#9eb3d2;transform:scaleX(0.9461);">Analysis</span>
<span class="t" style="left:969.55px;top:555px;font-size:17px;color:#e2e2e2;transform:scaleX(1.0598);">Off</span>
<div class="r" style="left:997px;top:554px;width:24px;height:20px;background:#007acc;"></div>
<span class="t" style="left:997.79px;top:555px;font-size:17px;color:#f0f0f0;transform:scaleX(1.0149);">On</span>
<span class="t" style="left:907.23px;top:612px;font-size:12.5px;color:#9eb3d2;transform:scaleX(0.9767);">Analysis</span>
<span class="t" style="left:907.33px;top:655px;font-size:16px;color:#9eb3d2;transform:scaleX(1.0414);">More 1/2</span>
</div></body></html>
